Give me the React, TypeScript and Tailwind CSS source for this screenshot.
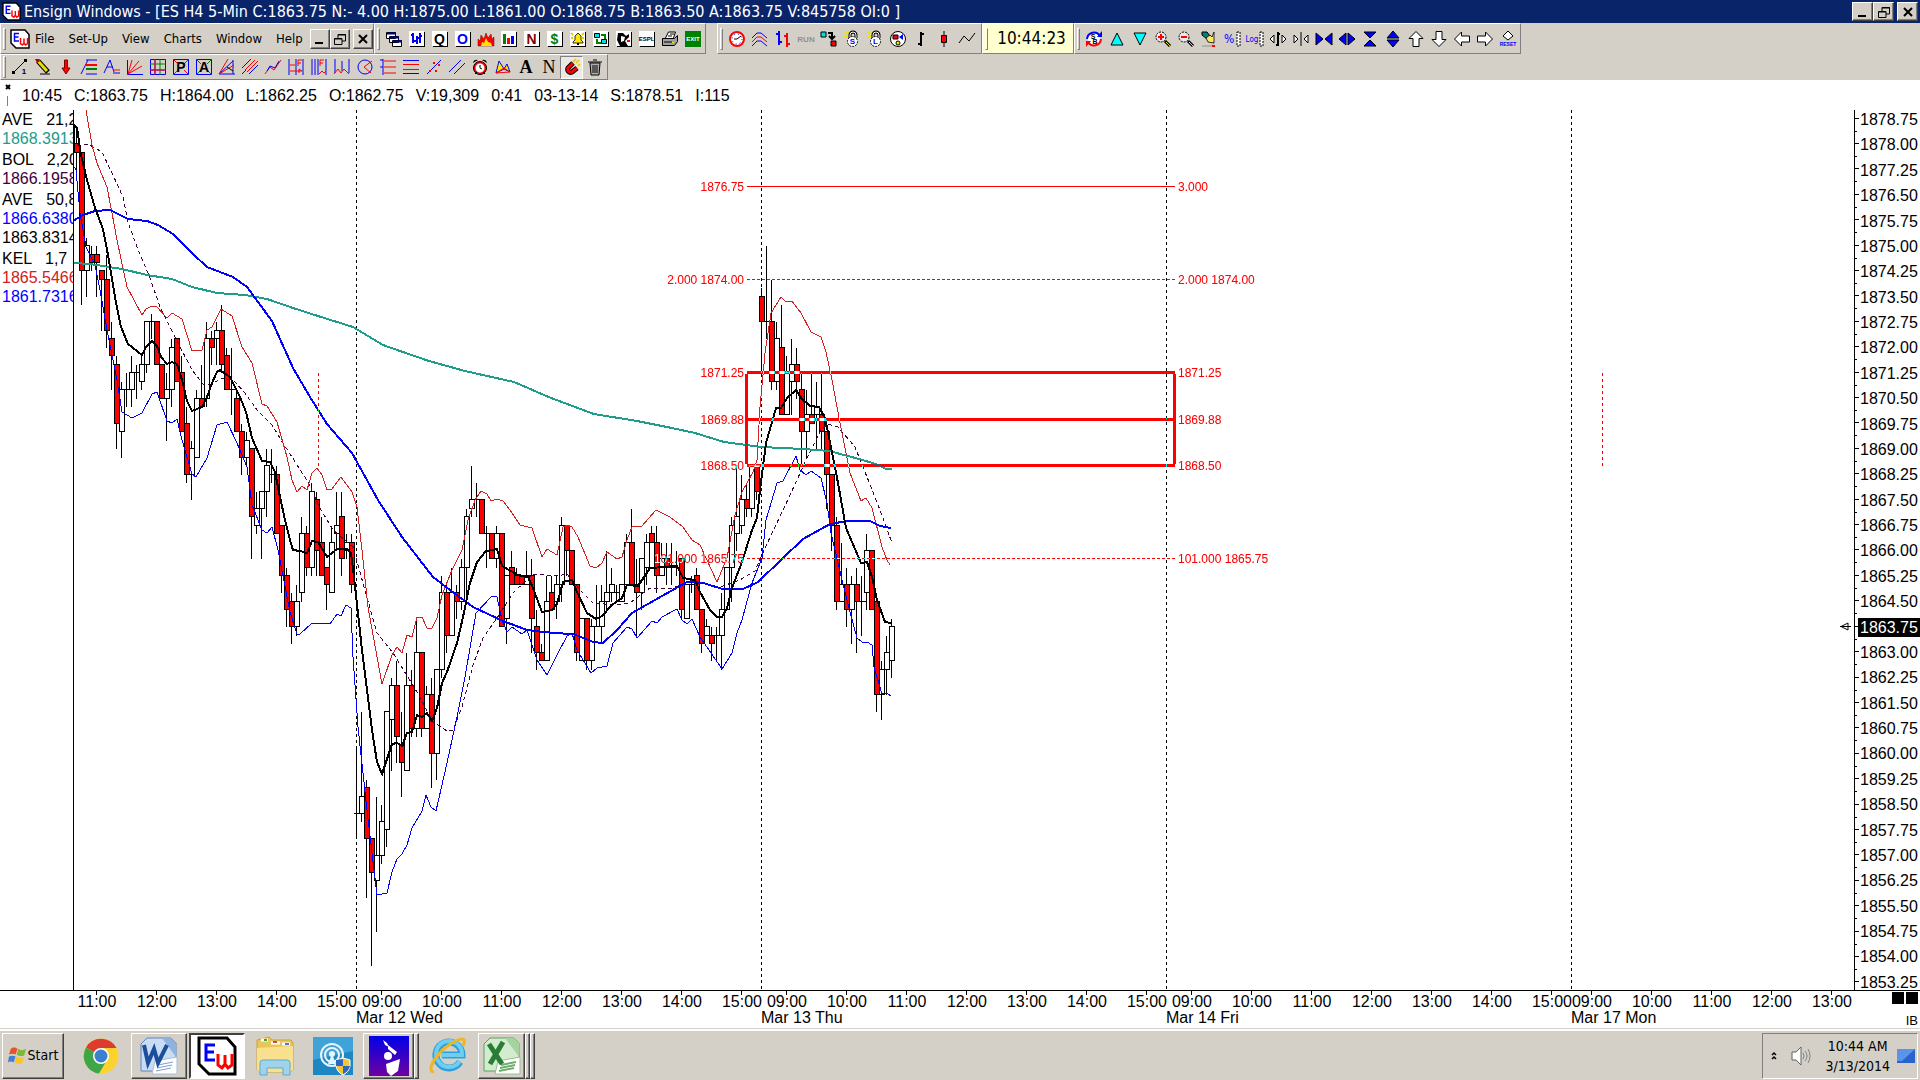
import React from "react";

/* ---------- chart data ---------- */

const PLOT_X = 73;
const PLOT_Y = 110;
const BAR_STEP = 5;
const TOP_PRICE_Y = 118.5;
const TICK_HEIGHT = 8.47;

// open, high, low, close in quarter-point ticks below 1878.75
const BARS: number[][] = [
  [1, 0, 3, 3], [3, 1, 7, 4], [4, 4, 22, 18], [18, 14, 21, 15], [16, 15, 18, 17], [16, 15, 21, 17],
  [18, 18, 25, 19], [19, 16, 27, 25], [26, 24, 32, 28], [29, 28, 39, 36], [37, 31, 40, 32], [32, 30, 34, 32],
  [32, 28, 34, 30], [30, 29, 33, 30], [31, 28, 32, 29], [29, 24, 30, 24], [24, 23, 26, 24], [24, 24, 29, 29],
  [29, 29, 33, 33], [33, 30, 38, 32], [32, 26, 34, 27], [26, 26, 31, 31], [30, 28, 37, 37], [36, 34, 43, 42],
  [42, 38, 45, 39], [40, 32, 40, 33], [33, 29, 34, 34], [33, 24, 34, 26], [26, 25, 29, 27], [26, 24, 29, 25],
  [25, 22, 30, 29], [28, 27, 32, 32], [32, 27, 35, 32], [33, 32, 37, 37], [37, 36, 42, 40], [40, 37, 41, 38],
  [39, 39, 52, 47], [48, 44, 49, 46], [46, 44, 52, 44], [44, 39, 47, 41], [42, 39, 43, 42], [42, 41, 49, 49],
  [48, 48, 56, 54], [54, 53, 60, 58], [57, 56, 62, 60], [60, 55, 61, 57], [56, 47, 57, 49], [49, 48, 54, 53],
  [53, 43, 54, 44], [45, 44, 54, 51], [50, 47, 54, 54], [53, 53, 58, 55], [56, 48, 56, 50], [49, 44, 51, 48],
  [47, 44, 54, 52], [51, 49, 52, 50], [50, 49, 56, 55], [82, 74, 85, 82], [82, 70, 83, 80], [79, 78, 92, 85],
  [85, 85, 100, 89], [90, 80, 96, 87], [87, 81, 88, 83], [84, 70, 86, 70], [71, 66, 77, 67], [67, 64, 76, 73],
  [74, 70, 80, 76], [77, 63, 77, 67], [67, 65, 73, 72], [72, 59, 73, 63], [63, 63, 73, 72], [72, 67, 72, 68],
  [68, 66, 79, 75], [75, 65, 78, 65], [65, 54, 66, 56], [56, 55, 63, 61], [61, 53, 61, 56], [56, 55, 59, 57],
  [57, 52, 58, 53], [53, 46, 57, 47], [46, 41, 47, 45], [45, 43, 47, 45], [45, 45, 49, 49], [49, 48, 53, 49],
  [49, 49, 52, 52], [52, 48, 53, 49], [49, 49, 60, 60], [59, 54, 62, 54], [53, 51, 55, 55], [54, 53, 55, 55],
  [54, 54, 55, 55], [55, 51, 55, 54], [54, 52, 63, 59], [60, 58, 65, 63], [63, 62, 64, 64], [64, 54, 64, 57],
  [56, 54, 58, 58], [57, 54, 59, 55], [55, 47, 57, 48], [48, 48, 54, 51], [51, 51, 55, 55], [55, 55, 64, 63],
  [64, 59, 64, 59], [59, 59, 65, 64], [64, 59, 65, 60], [60, 55, 60, 60], [60, 55, 62, 57], [57, 51, 58, 56],
  [56, 53, 57, 55], [56, 55, 57, 56], [57, 55, 57, 55], [55, 49, 55, 50], [50, 46, 55, 55], [55, 52, 61, 56],
  [56, 52, 58, 52], [53, 49, 55, 50], [49, 48, 50, 50], [50, 48, 56, 54], [54, 50, 54, 52], [52, 50, 55, 53],
  [53, 50, 55, 53], [53, 51, 54, 53], [52, 52, 59, 58], [59, 55, 59, 55], [55, 54, 56, 55], [54, 53, 58, 58],
  [58, 58, 63, 62], [61, 59, 61, 60], [61, 60, 64, 62], [61, 60, 64, 61], [61, 56, 65, 58], [58, 53, 58, 53],
  [53, 47, 57, 48], [49, 41, 51, 47], [48, 42, 49, 45], [45, 43, 47, 46], [46, 41, 47, 41], [41, 41, 45, 44],
  [21, 20, 30, 24], [24, 15, 26, 24], [24, 19, 32, 31], [31, 24, 32, 26], [27, 22, 35, 35], [35, 28, 35, 30],
  [31, 26, 35, 29], [29, 27, 33, 31], [32, 30, 41, 37], [37, 32, 40, 35], [35, 30, 36, 36], [35, 31, 39, 34],
  [35, 30, 39, 37], [37, 37, 46, 42], [42, 42, 51, 48], [48, 47, 58, 57], [57, 50, 57, 55], [55, 53, 60, 58],
  [58, 54, 62, 55], [55, 53, 63, 57], [57, 54, 61, 57], [56, 49, 58, 51], [51, 51, 58, 58], [57, 57, 70, 68],
  [68, 64, 71, 65], [65, 61, 68, 63], [64, 59, 66, 60],
];

const SLOW_AVERAGE =
  "73,263 90,264 122,269 147,275 172,279 192,287 217,293 245,295 267,299 293,308 318,316 353,327 383,345 400,351 429,361 465,371 514,382 551,398 594,414 637,421 672,428 695,433 724,442 761,447 804,449 829,451 859,459 876,464 886,469 892,469";
const MEDIUM_AVERAGE =
  "73,221 83,215 95,211 110,210 128,219 147,221 158,225 173,234 192,253 207,267 233,277 247,287 272,321 293,368 310,397 327,424 352,453 378,500 402,537 433,577 450,590 473,607 503,621 527,630 553,633 573,634 593,642 603,643 617,630 632,613 655,600 687,582 703,583 723,589 743,589 758,582 782,559 803,539 830,524 847,521 870,521 880,526 891,528";
const FAST_AVERAGE =
  "73,124 77,128 81,155 87,180 95,208 103,229 108,255 115,297 121,327 128,344 142,355 146,347 152,341 157,346 161,357 167,364 172,362 177,364 182,380 187,401 192,411 202,407 207,397 212,383 217,372 220,370 230,377 240,397 246,412 252,438 262,461 270,462 275,472 280,497 285,520 290,540 293,550 300,551 307,553 312,541 318,542 327,557 337,549 347,549 351,553 354,577 362,650 372,730 377,762 382,774 392,744 397,743 402,746 407,733 412,732 417,715 422,717 427,713 432,721 437,708 442,683 447,672 457,643 463,617 470,583 477,562 486,551 497,549 502,566 518,575 528,577 533,588 542,612 552,610 557,604 563,582 572,580 577,592 587,613 596,619 602,616 612,605 622,598 627,585 638,586 650,568 677,566 683,578 695,580 700,592 710,610 717,617 722,617 727,608 732,588 742,562 752,530 757,518 760,490 766,443 776,408 781,408 787,398 796,390 802,399 810,406 819,407 825,418 831,447 838,483 846,528 861,563 867,562 872,577 877,600 885,622 891,623";
const UPPER_CHANNEL =
  "84,100 86,110 92,145 97,163 107,187 112,213 117,240 127,287 142,315 146,309 152,306 157,307 167,318 172,313 182,319 192,351 202,350 207,330 212,327 221,309 232,316 242,347 252,363 262,404 267,406 277,422 287,457 292,480 297,492 302,486 307,490 312,473 317,468 322,475 327,490 332,489 341,477 352,492 357,507 362,550 368,607 382,684 392,655 397,647 402,653 407,635 412,637 417,617 422,617 427,628 432,628 437,618 442,595 452,570 462,550 468,520 475,500 481,491 487,494 491,501 497,499 503,501 510,510 520,525 532,528 542,557 547,549 557,555 563,527 567,525 572,527 578,537 590,566 596,568 602,563 607,552 617,559 622,557 627,540 632,527 642,526 656,510 670,517 683,527 692,540 700,545 707,560 717,582 727,558 735,515 742,492 753,472 757,460 760,407 765,353 771,313 781,297 786,302 792,301 801,313 811,332 821,337 826,352 832,380 840,423 850,473 861,501 866,498 872,508 882,547 887,560 890,565";
const LOWER_CHANNEL =
  "73,165 76,170 80,213 86,247 95,265 100,290 107,330 117,380 122,412 132,418 142,413 152,394 157,392 167,421 172,423 177,419 182,440 192,474 196,477 207,458 217,425 227,422 237,443 247,467 252,505 262,530 267,533 272,527 278,550 290,612 297,634 300,634 312,623 330,624 337,614 341,616 346,605 351,608 353,657 358,727 367,810 372,853 377,895 387,893 392,872 397,859 402,854 407,845 412,828 422,811 426,795 431,807 436,811 447,763 457,717 465,677 476,613 492,596 497,597 502,620 507,632 512,627 522,634 527,630 537,660 547,675 557,655 567,636 572,633 577,650 591,673 597,668 607,666 613,643 627,627 632,629 637,638 652,621 657,623 662,617 677,609 682,620 687,624 692,619 700,637 722,669 732,653 737,633 742,620 752,583 762,558 766,520 777,483 783,481 796,456 800,470 806,475 811,471 821,478 827,503 831,533 842,580 850,612 857,638 862,642 867,642 872,645 874,667 882,694 887,693 891,696";
const BAND_MIDLINE =
  "77,146 88,144 102,152 113,175 123,197 128,222 137,247 150,278 160,307 175,337 192,370 203,384 212,384 222,378 233,380 245,393 257,410 272,425 283,443 308,482 320,508 333,530 353,547 363,583 377,633 393,653 417,692 433,722 447,731 453,730 462,707 473,665 483,638 497,618 513,593 533,574 557,576 567,574 580,590 593,603 617,605 630,603 650,588 670,589 693,580 717,588 740,580 755,571 765,548 783,510 797,480 806,460 821,430 828,424 838,427 855,447 867,477 880,510 892,543";

const SESSION_LINES = [356, 761, 1166, 1571];

const LEVELS = [
  { y: 186, left: "1876.75", right: "3.000", width: 1, dash: undefined },
  { y: 279, left: "2.000 1874.00", right: "2.000 1874.00", width: 1, dash: "3 2" },
  { y: 372, left: "1871.25", right: "1871.25", width: 3, dash: undefined },
  { y: 419, left: "1869.88", right: "1869.88", width: 3, dash: undefined },
  { y: 465, left: "1868.50", right: "1868.50", width: 3, dash: undefined },
  { y: 558, left: "101.000 1865.75", right: "101.000 1865.75", width: 1, dash: "3 2" },
];

const PRICES = Array.from({ length: 35 }, (_, i) => (1878.75 - i * 0.75).toFixed(2));
const tickY = (t: number) => Math.round(TOP_PRICE_Y + t * TICK_HEIGHT - 0.5) + 0.5;

/* ---------- toolbar icons (16 x 16 grid) ---------- */

const R = "#ff0000";
const B = "#0000ff";
const K = "#000000";
const G = "#008000";

type P = { d: string; c?: string; f?: string; w?: number };
const L = ({ d, c = K, f = "none", w = 1 }: P) => <path d={d} stroke={c} fill={f} strokeWidth={w} />;
const T = ({ s, c = K, z = 14, x = 8, y = 13, serif = false }: { s: string; c?: string; z?: number; x?: number; y?: number; serif?: boolean }) => (
  <text x={x} y={y} fontSize={z} fontWeight="bold" fill={c} textAnchor="middle" fontFamily={serif ? "Liberation Serif, serif" : "Liberation Sans, sans-serif"}>
    {s}
  </text>
);
const Card = ({ children }: { children: React.ReactNode }) => (
  <>
    <path d="M1 1h15v15H1z" fill={K} />
    <path d="M0 0h15v15H0z" fill="#fff" />
    {children}
  </>
);
const Padlock = ({ s }: { s: string }) => (
  <>
    <path d="M1 1l3 2M0 5h4M5 0v3" stroke="#e8e800" strokeWidth="2" />
    <path d="M6 7V4a3 3 0 0 1 6 0v3" fill="none" stroke={K} strokeWidth="3" />
    <path d="M6 7V4a3 3 0 0 1 6 0v3" fill="none" stroke="#fff" />
    <circle cx="8.500" cy="10.500" r="5" fill="#fff" stroke={K} strokeDasharray="2 1" />
    <T s={s} c={B} z={8} x={8.5} y={13} />
  </>
);
const Lens = ({ s }: { s: string }) => (
  <>
    <path d="M10 10l5 5" stroke={K} strokeWidth="3" />
    <path d="M11 11l4 4" stroke="#e8e800" />
    <circle cx="6" cy="6" r="5" fill="#e8e8e8" stroke={K} strokeDasharray="2 1" />
    <path d={s} stroke={R} strokeWidth="2" />
  </>
);

type Tool = [string, React.ReactNode];

const WINDOW_TOOLS: Tool[] = [
  ["Cascade", <><L d="M.5 1.500h9v6h-9zM3.500 5.500h9v6h-9zM6.500 9.500h9v6h-9z" f="#fff" /><L d="M1 2.500h9M4 6.500h9M7 10.500h9" c="#000080" w={2} /></>],
  ["Bar chart", <Card><L d="M4 2v10M2 4h2M4 10h3M8 5v8M11 2v10M8 7h3M11 5h2" c={B} w={2} /></Card>],
  ["Quote", <Card><T s="Q" x={7.5} /></Card>],
  ["Options", <Card><T s="O" c={B} x={7.5} /></Card>],
  ["Heat map", <><path d="M0 15V8l2 2 1-6 3 4 2-6 2 5 3-4 1 5 2-2v9z" fill={R} stroke="#800000" strokeWidth=".5" /><path d="M3 15l1-4 2 1 2-5 2 4 3 1 1 3z" fill="#ffe000" /></>],
  ["Volume chart", <Card><path d="M2 3h3v10H2z" fill={G} /><path d="M6 7h3v6H6z" fill={R} /><path d="M10 5h3v8h-3z" fill={B} /></Card>],
  ["News", <Card><T s="N" c="#800000" x={7.5} /></Card>],
  ["Account", <Card><T s="$" c={G} x={7.5} /></Card>],
  ["Alert", <Card><path d="M8 2l3 3v4l2 2v1H3v-1l2-2V5z" fill="#ffe800" stroke={K} strokeWidth=".8" /><L d="M1 2l2 2M14 2l-2 2M1 7h2M12 7h2" c="#e8d000" w={2} /><path d="M7 12h2v2H7z" /></Card>],
  ["Network", <Card><path d="M1.500 2.500h5v4h-5zM8.500 8.500h5v4h-5z" fill="#00e0e0" stroke={K} /><L d="M8 4h4v4M4 8v4h4" c={G} w={2} /></Card>],
  ["Chat", <Card><path d="M2 2h5l3 3 3-2v3l-4 4 3 5H4L1 9z" fill={K} /><path d="M5 5l4 1-1 4-3 1z" fill="#fff" /><path d="M11 9h3v2h-3z" fill={R} /></Card>],
  ["ESPL", <Card><T s="ESPL" z={6} x={7.5} y={10} /></Card>],
  ["Print", <><L d="M3.500 7l3-6h7l-2 6" f="#fff" /><path d="M.5 7.500h12l3-3v6l-3 4H.5z" fill="#a0a0a0" stroke={K} /><L d="M2 11h8M8 3h4M6 5h4" /><path d="M10 11h2v1h-2z" fill="#e8e800" /></>],
  ["Exit", <><path d="M0 0h16v16H0z" fill={G} /><T s="EXIT" c="#fff" z={6} y={10} /></>],
];

const CHART_TOOLS: Tool[] = [
  ["Clock", <><circle cx="8" cy="8" r="7" fill="#fff" stroke={R} strokeWidth="2" /><L d="M8 8l4-3M8 8H5" /><circle cx="8" cy="8" r="5" fill="none" stroke={B} strokeDasharray="1 3" /></>],
  ["Studies", <><L d="M0 7l5-5h4l6 5" c={B} /><L d="M0 11l5-5h4l6 5" c={R} /><L d="M0 15l5-5h4l6 5" c={B} /></>],
  ["Bars", <><L d="M4 0v14M1 3h3M4 11h3" c={B} w={2} /><L d="M12 2v14M9 5h3M12 13h3" c={R} w={2} /></>],
  ["Run", <T s="RUN" c="#909090" z={8} y={11} />],
  ["Replace", <><path d="M0 1h5v5H0z" fill="#00e0e0" stroke={K} /><path d="M10 10h5v5h-5z" fill={R} stroke={K} /><L d="M7 2h4v5M8 5l3 3 3-3" w={2} /></>],
  ["Save lock", <Padlock s="S" />],
  ["Load lock", <Padlock s="L" />],
  ["Shapes", <><circle cx="8" cy="8" r="7.500" fill="#fff" stroke={K} /><path d="M3 4h5v4H3z" fill={R} stroke={K} /><path d="M13 3v6L9 6z" fill={B} /><circle cx="8" cy="12" r="2" fill="#e8e800" stroke={K} /></>],
  ["Bar style", <L d="M8 1v14M5 13h3M8 3h3" w={2} />],
  ["Candle style", <><L d="M8 0v16" /><path d="M5.500 4.500h5v7h-5z" fill={R} stroke={K} /></>],
  ["Line style", <L d="M0 12l5-7 5 5 6-8" />],
];

const VIEW_TOOLS: Tool[] = [
  ["Refresh", <><circle cx="8" cy="8" r="6" fill="#fff" /><path d="M1 8a7 7 0 0 1 13-3" fill="none" stroke={B} strokeWidth="2" /><path d="M11 6h5V0z" fill={B} /><path d="M15 8a7 7 0 0 1-13 3" fill="none" stroke={R} strokeWidth="2" /><path d="M5 10H0v6z" fill={R} /><T s="S" z={7} x={7} y={8} /><T s="B" z={7} x={9} y={13} /></>],
  ["Up", <L d="M8 2L2 14h12z" f="#00ffff" />],
  ["Down", <L d="M8 14L2 2h12z" f="#00ffff" />],
  ["Zoom in", <Lens s="M3 6h6M6 3v6" />],
  ["Zoom out", <Lens s="M3 6h6" />],
  ["Clean", <><path d="M1 1h5l3 4-3 3-5-4z" fill="#008080" stroke={K} /><path d="M5 7l4-3 2 2 2-5v11l-6-1z" fill="#ffe860" stroke={K} strokeWidth=".8" /><L d="M1 15h12" c="#909090" /><path d="M11 14h3v2h-3z" fill={R} /></>],
  ["Percent scale", <><text x="5" y="12" fontSize="12" fill={B} textAnchor="middle">%</text><path d="M13 1h3v14h-3z" fill="#fff" stroke={K} strokeDasharray="2 1" /></>],
  ["Log scale", <><text x="5" y="11" fontSize="8" fill={B} textAnchor="middle">Log</text><path d="M13 1h3v14h-3z" fill="#fff" stroke={K} strokeDasharray="2 1" /></>],
  ["Bar spacing wide", <><L d="M4 4v8L0 8zM12 4v8l4-4z" f="#fff" /><L d="M8 1v14M6 14h2M8 3h2" w={2} /></>],
  ["Bar spacing narrow", <><L d="M1 4v8l4-4zM15 4v8l-4-4z" f="#fff" /><L d="M8 1v14" /></>],
  ["Compress", <path d="M0 2l7 6-7 6zM16 2L9 8l7 6z" fill={B} stroke={K} />],
  ["Expand", <path d="M7 2v12L0 8zM9 2v12l7-6z" fill={B} stroke={K} />],
  ["Compress vertically", <path d="M2 1h12L8 7zM2 15h12L8 9z" fill={B} stroke={K} />],
  ["Expand vertically", <path d="M2 7h12L8 0zM2 9h12l-6 7z" fill={B} stroke={K} />],
  ["Scroll up", <L d="M8 .5l7 7h-4v8H5v-8H1z" f="#fff" />],
  ["Scroll down", <L d="M8 15.500l7-7h-4v-8H5v8H1z" f="#fff" />],
  ["Scroll left", <L d="M.5 8l7-7v4h8v6h-8v4z" f="#fff" />],
  ["Scroll right", <L d="M15.500 8l-7-7v4h-8v6h8v4z" f="#fff" />],
  ["Reset", <><L d="M8 0l5 5-5 4-5-4z" f="#fff" /><T s="RESET" c={B} z={5} y={15} /></>],
];

const DRAW_TOOLS: Tool[] = [
  ["Trend line", <><L d="M2 13L13 2" /><path d="M0 12h3v3H0zM12 0h3v3h-3z" /><T s="1" z={8} x={12} y={15} /></>],
  ["Pencil", <><L d="M3 2l10 11" w={5} /><L d="M3 2l9 10" c="#e8e000" w={3} /><L d="M5 15h10" /><path d="M0 0h4l1 2-3 2z" fill="#c00000" /></>],
  ["Marker", <path d="M6.500 1v8H4l4 6 4-6H9.500V1z" fill={R} stroke="#800000" />],
  ["Retracement", <><L d="M0 15L7 1" c={B} /><L d="M5 1h11M5 15h11" c={B} /><L d="M5 6h11" c={R} w={2} /><L d="M5 10h11" c={G} w={2} /></>],
  ["Projection", <><L d="M0 14L6 1l4 12M3 8h6" c={B} /><L d="M9 11h7" c={R} /><L d="M9 14h7" c={B} /></>],
  ["Fan", <><L d="M.5 1v14.500H16" c={B} /><L d="M1 15L5 1M1 15L12 2M1 15l14-8" c={R} /></>],
  ["Grid", <><L d="M.5 .5h15v15H.5zM5 0v16M0 11h16" c={B} /><L d="M10 0v16M0 5h16" c={G} /><L d="M5 0v16M0 11h16" c={R} /></>],
  ["Pivot", <><L d="M.5 .5h15v15H.5z" c={B} /><L d="M1 1l4 4M11 11l4 4" c={R} /><L d="M15 1l-4 4M5 11l-4 4" c={G} /><T s="P" y={13} /></>],
  ["Andrews", <><L d="M.5 .5h15v15H.5z" c={B} /><L d="M1 1l4 4M11 11l4 4" c={R} /><L d="M15 1l-4 4M5 11l-4 4" c={G} /><T s="A" y={13} /></>],
  ["Angle", <><L d="M14 2L0 15h16M14 1v14" c={B} /><L d="M0 15L9 0M0 15l15-9" c={R} /><L d="M8 8l6 4" /></>],
  ["Pitchfork", <><L d="M0 9l9-9M7 15l9-9M0 15l4-4" c={B} /><L d="M3 11L13 1M5 13L16 2" c={R} /></>],
  ["Zigzag", <><L d="M0 15l5-7 4 3 7-10" c={R} /><L d="M2 12l3-5 5 2 4-7" c={B} /></>],
  ["Fibonacci time", <><L d="M1 0v16M8 0v16M15 0v16" c={B} /><L d="M2 6h5M2 12h12l-3-2v4M10 7V1h4M10 4h3" c={R} /></>],
  ["Cycle lines", <><L d="M1 0v16M4 0v16M7 0v16M15 0v16" c={B} /><L d="M9 7V1h4M9 4h3M8 15l3-3 2 2 2-2" c={R} /></>],
  ["Cycles", <><L d="M1 0v14M8 2v10M15 0v14" c={B} /><L d="M0 15l4-5 3 4 3-4 5 5" c={R} /></>],
  ["Circle", <><circle cx="8" cy="8" r="7" fill="none" stroke={B} /><L d="M15 2L7 8l7 6" c={R} /></>],
  ["Levels left", <><L d="M3 0v16M0 8h3M0 1h3" c={B} /><L d="M4 2h12M4 8h12M4 14h12" c={R} /></>],
  ["Levels", <><L d="M0 1.500h16M0 14.500h16" c={B} /><L d="M0 5.500h16M0 10.500h16" c={R} /></>],
  ["Regression", <><L d="M1 15L15 1" c={B} /><path d="M3 11h2v2H3zM9 11h2v2H9zM7 3h2v2H7zM12 5h2v2h-2z" fill={R} /></>],
  ["Parallel lines", <L d="M0 13L12 1M5 15L16 4" c={B} />],
  ["Alarm", <><circle cx="8" cy="9" r="5.500" fill="#fff" stroke={R} strokeWidth="2" /><circle cx="8" cy="9" r="6.500" fill="none" stroke={K} /><path d="M1 4q1-4 5-3zM15 4q-1-4-5-3z" /><L d="M8 6v3l2 1M3 15l2-2M13 15l-2-2" /></>],
  ["Pattern", <><path d="M1 14L4 2l5 8z M9 10l3-5 3 8z" fill="#ffe800" stroke={B} /><L d="M1 14l14-1-6-4z" c={R} /></>],
  ["Bold text", <T s="A" z={18} y={14} serif />],
  ["Note", <text x="8" y="14" fontSize="18" textAnchor="middle" fontFamily="Liberation Serif, serif">N</text>],
  ["Magnet", <><path d="M9 4L4 9a3 3 0 0 0 4 4l5-4" fill="none" stroke={K} strokeWidth="5" /><path d="M9 4L4 9a3 3 0 0 0 4 4l5-4" fill="none" stroke={R} strokeWidth="3" /><L d="M9 3l3-3M12 4l3-3M14 7l2-2" c="#e8d800" w={2} /></>],
  ["Delete", <><path d="M3 4h10l-1 12H4z" fill="#b0b0b0" stroke={K} /><L d="M1 3h14M6 1h4M6 6v8M8 6v8M10 6v8" /></>],
];

function ToolButton({ tool, pressed }: { tool: Tool; pressed?: boolean }) {
  return (
    <button
      aria-label={tool[0]}
      className={
        pressed
          ? "flex h-[23px] w-[23px] shrink-0 items-center justify-center border border-t-[#808080] border-l-[#808080] border-r-white border-b-white bg-[#ebe9e4]"
          : "flex h-[23px] w-[23px] shrink-0 items-center justify-center"
      }
    >
      <svg viewBox="0 0 16 16" className="size-4 overflow-visible">
        {tool[1]}
      </svg>
    </button>
  );
}

function Band({ children, className = "" }: { children: React.ReactNode; className?: string }) {
  return (
    <div className={"flex shrink-0 items-center border border-t-white border-l-white border-r-[#808080] border-b-[#808080] " + className}>
      <span className="ml-[2px] mr-[2px] h-[22px] w-[3px] shrink-0 border border-t-white border-l-white border-r-[#808080] border-b-[#808080]" />
      {children}
    </div>
  );
}

function EnsignLogo({ className }: { className: string }) {
  return (
    <svg viewBox="0 0 40 40" className={"shrink-0 " + className}>
      <path d="M2 2h28l8 9v27H12L2 28z" fill="#fff" stroke="#000" strokeWidth="3" />
      <path d="M18 9H9v15h9M9 16h8" fill="none" stroke="#0000ff" strokeWidth="3" />
      <path d="M21 18v11l4 3 3-4 3 4 4-3V18M28 19v9" fill="none" stroke="#ff0000" strokeWidth="3" />
    </svg>
  );
}

const RAISED =
  "flex shrink-0 items-center justify-center border border-t-white border-l-white border-r-[#404040] border-b-[#404040] bg-[#d4d0c8] shadow-[inset_-1px_-1px_0_#808080]";

function WindowButtons({ className }: { className: string }) {
  return (
    <div className="flex items-center">
      <button aria-label="Minimize" className={RAISED + " " + className}>
        <svg viewBox="0 0 12 12" className="size-3"><path d="M1 9h8v2H1z" /></svg>
      </button>
      <button aria-label="Restore" className={RAISED + " " + className}>
        <svg viewBox="0 0 12 12" className="size-3"><path d="M4 5V1.500h7.500V8H8M4 2h8M.5 5.500H8v6H.5zM1 6h7" fill="none" stroke="#000" /></svg>
      </button>
      <button aria-label="Close" className={RAISED + " ml-[3px] " + className}>
        <svg viewBox="0 0 12 12" className="size-3"><path d="M2 2l8 8M10 2l-8 8" stroke="#000" strokeWidth="2" /></svg>
      </button>
    </div>
  );
}

/* ---------- chart ---------- */

function PricePlot() {
  return (
    <svg className="isolate block h-full w-full" role="img" aria-label="ES H4 5-minute candlestick chart">
      <rect width="100%" height="100%" fill="#fff" />
      <g transform={`translate(${-PLOT_X} ${-PLOT_Y})`}>
        <g stroke="#000" strokeDasharray="3 3" shapeRendering="crispEdges">
          {SESSION_LINES.map((x) => (
            <line key={x} x1={x + 0.5} x2={x + 0.5} y1={PLOT_Y} y2="200%" />
          ))}
        </g>
        <g stroke="#000" shapeRendering="crispEdges">
          {BARS.map(([o, h, l, c], i) => {
            const x = 71.5 + i * BAR_STEP;
            const top = tickY(Math.min(o, c));
            const bottom = tickY(Math.max(o, c));
            return (
              <g key={i}>
                <line x1={x} x2={x} y1={tickY(h)} y2={tickY(l)} />
                {o === c ? (
                  <line x1={x - 3} x2={x + 4} y1={top} y2={top} />
                ) : (
                  <rect x={x - 2} y={top} width={5} height={bottom - top} fill={c > o ? "#ff0000" : "#fff"} />
                )}
              </g>
            );
          })}
        </g>
        <g fill="none" shapeRendering="crispEdges">
          <polyline points={BAND_MIDLINE} stroke="#400040" strokeDasharray="4 3" />
          <polyline points={UPPER_CHANNEL} stroke="#d02020" />
          <polyline points={LOWER_CHANNEL} stroke="#0000ff" />
          <polyline points={SLOW_AVERAGE} stroke="#209c8a" strokeWidth="2" />
          <polyline points={MEDIUM_AVERAGE} stroke="#0000ff" strokeWidth="2" />
          <polyline points={FAST_AVERAGE} stroke="#000" strokeWidth="2" />
        </g>
        <g className="mix-blend-difference" stroke="#00ffff" fill="none" shapeRendering="crispEdges">
          <path d="M318.500 373V466M1602.500 373V466" strokeDasharray="3 3" />
          <path d="M746.500 374V464M1174.500 374V464" strokeWidth="3" />
          {LEVELS.map((v) => (
            <line key={v.y} x1="747" x2="1175" y1={v.y + 0.5} y2={v.y + 0.5} strokeWidth={v.width} strokeDasharray={v.dash} />
          ))}
        </g>
        <g className="mix-blend-difference" fill="#00ffff" fontSize="12" fontFamily="Liberation Sans, sans-serif">
          {LEVELS.map((v) => (
            <g key={v.y}>
              <text x="744" y={v.y + 5} textAnchor="end">{v.left}</text>
              <text x="1178" y={v.y + 5}>{v.right}</text>
            </g>
          ))}
        </g>
      </g>
    </svg>
  );
}

function Legend() {
  const groups = [
    { name: "AVE   21,2", values: [["1868.3913", "text-[#209c8a]"]] },
    { name: "BOL   2,20", values: [["1866.1958", "text-[#400040]"]] },
    { name: "AVE   50,8", values: [["1866.6380", "text-[#0000ff]"], ["1863.8314", "text-black"]] },
    { name: "KEL   1,7 ,", values: [["1865.5466", "text-[#d02020]"], ["1861.7316", "text-[#0000ff]"]] },
  ];
  return (
    <div className="flex w-[73px] shrink-0 flex-col gap-[2px] overflow-hidden pl-[2px] leading-[19px] whitespace-pre">
      {groups.map((g) => (
        <div key={g.name}>
          <div>{g.name}</div>
          {g.values.map(([v, tone]) => (
            <div key={v} className={tone}>{v}</div>
          ))}
        </div>
      ))}
    </div>
  );
}

function PriceAxis() {
  return (
    <div className="relative flex w-[66px] shrink-0 border-l border-black">
      <svg className="h-full w-1 shrink-0" shapeRendering="crispEdges">
        {PRICES.map((p, i) => {
          const y = Math.round(TOP_PRICE_Y - PLOT_Y + i * 3 * TICK_HEIGHT) - 0.5;
          return <path key={p} d={`M0 ${y}h4M0 ${y + 13}h2`} stroke="#000" />;
        })}
      </svg>
      <div className="flex flex-col justify-between pt-[3px] pl-px leading-[14px]">
        {PRICES.map((p) => (
          <span key={p}>{p}</span>
        ))}
      </div>
      <span className="absolute top-[508px] right-0 left-[3px] bg-black pl-[2px] leading-[19px] text-white">1863.75</span>
      <svg className="absolute top-[512px] -left-[15px] h-[9px] w-[11px]" viewBox="0 0 11 9">
        <path d="M0 4.500h11M1 4.500L8 1v7z" fill="#fff" stroke="#000" />
      </svg>
    </div>
  );
}

function Hours({ labels, className }: { labels: string[]; className: string }) {
  return (
    <div className={"flex " + className}>
      {labels.map((h) => (
        <span key={h} className="flex w-[60px] shrink-0 flex-col items-center">
          <span className="-ml-px h-1 w-px bg-black" />
          <span className="leading-[14px]">{h}</span>
        </span>
      ))}
    </div>
  );
}

function TimeAxis() {
  const day = ["09:00", "10:00", "11:00", "12:00", "13:00", "14:00", "15:00"];
  return (
    <div className="flex h-[39px] shrink-0 overflow-hidden border-t border-black">
      <div className="w-[356px] shrink-0">
        <Hours labels={day.slice(2)} className="pl-[67px]" />
      </div>
      {["Mar 12 Wed", "Mar 13 Thu", "Mar 14 Fri"].map((d) => (
        <div key={d} className="w-[405px] shrink-0">
          <Hours labels={day} className="-ml-1" />
          <div className="leading-[18px]">{d}</div>
        </div>
      ))}
      <div className="min-w-0 flex-1">
        <Hours labels={day.slice(0, 5)} className="-ml-[9px]" />
        <div className="leading-[18px]">Mar 17 Mon</div>
      </div>
      <div className="flex flex-col items-end justify-between pt-px pr-[2px]">
        <div className="flex gap-[2px]">
          <span className="size-3 bg-black" />
          <span className="size-3 bg-black" />
        </div>
        <span className="text-[13px] leading-4">IB</span>
      </div>
    </div>
  );
}

/* ---------- taskbar ---------- */

const TASK = "flex h-[46px] w-[56px] shrink-0 items-center justify-center ";

function Taskbar() {
  return (
    <footer className="flex h-[51px] shrink-0 items-center border-t-2 border-white bg-[#d4d0c8] pr-[2px] pl-[2px] shadow-[0_-1px_0_#d4d0c8]">
      <button className={RAISED + " h-[46px] w-[62px] gap-px text-[14px]"}>
        <svg viewBox="0 0 20 20" className="size-[19px]">
          <path d="M3 3c2-2 5-2 7 0L8 9C6 8 4 8 1 9z" fill="#e8542a" />
          <path d="M11 3c2 2 5 2 8 0l-2 7c-3 1-5 1-8-1z" fill="#7db83a" />
          <path d="M1 11c2-1 5-1 7 0l-2 6c-2-1-4-1-6 0z" fill="#3f7fd6" />
          <path d="M9 11c2 1 5 2 8 1l-2 6c-3 1-6 1-8-1z" fill="#f7c52a" />
        </svg>
        Start
      </button>
      <button aria-label="Chrome" className={TASK + "ml-[9px]"}>
        <svg viewBox="0 0 36 36" className="size-9">
          <circle cx="18" cy="18" r="17.500" fill="#fcd22f" />
          <path d="M18 18L3 9.500A17.500 17.500 0 0 1 33.500 10H18z" fill="#dd3b2e" />
          <path d="M3 9.500A17.500 17.500 0 0 0 16 35.500l8-13.500-6-4z" fill="#3fa648" />
          <circle cx="18" cy="18" r="8" fill="#fff" />
          <circle cx="18" cy="18" r="6.500" fill="#3b7fd1" />
        </svg>
      </button>
      <button aria-label="Word" className={RAISED + " ml-[2px] h-[46px] w-[56px]"}>
        <svg viewBox="0 0 38 38" className="size-[38px]">
          <path d="M7 1h24l5 5v28H1V7z" fill="#c9dcf3" stroke="#5f86bd" />
          <path d="M22 1h9l5 5v14z" fill="#8fb2e0" />
          <path d="M15 24l22-4v17H12z" fill="#fff" stroke="#a9bfdc" />
          <path d="M18 28l15-3M17 31l15-3M16 34l15-3" stroke="#7f9fcd" />
          <path d="M4 8l4 18 6-14 4 14L27 8" fill="none" stroke="#1b4f9c" strokeWidth="4" />
        </svg>
      </button>
      <button aria-label="Ensign Windows" className="ml-[2px] flex h-[46px] w-[56px] shrink-0 items-center justify-center border-2 border-t-[#404040] border-l-[#404040] border-r-white border-b-white bg-white">
        <EnsignLogo className="size-10" />
      </button>
      <button aria-label="Explorer" className={TASK + "ml-[2px]"}>
        <svg viewBox="0 0 40 40" className="size-10">
          <path d="M2 4l12-3 3 3h19l2 3v27l-3 2H4l-2-2z" fill="#e9c65c" stroke="#c9a43a" />
          <path d="M6 4h7M16 7h9M27 8h8" stroke="#fff" strokeWidth="3" />
          <path d="M9 4h3" stroke="#3d9b47" strokeWidth="2" /><path d="M18 6h4" stroke="#d04a3a" strokeWidth="2" /><path d="M30 8h4" stroke="#3b82d6" strokeWidth="2" />
          <path d="M2 12l36-2v24l-3 2H4l-2-2z" fill="#f8e08e" />
          <path d="M5 39V27q0-3 3-3h24q3 0 3 3v12h-7v-7H12v7z" fill="#9fd3ec" stroke="#5fa9cf" />
        </svg>
      </button>
      <button aria-label="Remote access" className={TASK + "ml-[2px]"}>
        <svg viewBox="0 0 40 40" className="size-10">
          <path d="M0 1h40v38H0z" fill="#1d87c4" /><path d="M0 1h40v14L0 24z" fill="#3fa2d8" />
          <circle cx="19" cy="19" r="11" fill="none" stroke="#e6f4fc" strokeWidth="2" />
          <circle cx="19" cy="19" r="7" fill="none" stroke="#e6f4fc" strokeWidth="2" />
          <path d="M19 18l-4 10h8z" fill="#e6f4fc" /><circle cx="19" cy="18" r="3" fill="#e6f4fc" />
          <path d="M23 24l7-2 7 2v6q-1 6-7 9-6-3-7-9z" fill="#f3c63a" stroke="#fff" />
          <path d="M30 23v7h-7v-6zM30 30h7q-1 5-7 8z" fill="#2f66c4" />
        </svg>
      </button>
      <div className="ml-[2px] flex">
        <button aria-label="Drawing app" className={RAISED + " h-[46px] w-[51px]"}>
          <svg viewBox="0 0 40 40" className="size-10">
            <defs><linearGradient id="night" x2="0" y2="1"><stop stopColor="#0000e8" /><stop offset="1" stopColor="#7000a0" /></linearGradient></defs>
            <path d="M0 0h40v40H0z" fill="url(#night)" />
            <path d="M14 4l4 3 2 4-4-2zM19 9l9 7-2 3-7-6z" fill="#fff" /><circle cx="19" cy="20" r="4" fill="#fff" />
            <path d="M17 28l14-5-2 12-7 5-4-4z" fill="#fff" />
          </svg>
        </button>
        <span className={RAISED + " h-[46px] w-[5px]"} />
      </div>
      <button aria-label="Internet Explorer" className={TASK + "ml-px"}>
        <svg viewBox="0 0 38 38" className="size-[38px]">
          <path d="M31 25a13 13 0 1 1 2-7H13" fill="none" stroke="#2f9fdc" strokeWidth="7" />
          <path d="M31 24a13 13 0 1 1 2-6H12" fill="none" stroke="#6fcdf2" strokeWidth="4" />
          <path d="M5 35C-4 34 8 16 20 8 30 1 39-1 34 9" fill="none" stroke="#eeb622" strokeWidth="3" />
        </svg>
      </button>
      <div className="ml-[2px] flex">
        <button aria-label="Excel" className={RAISED + " h-[46px] w-[47px]"}>
          <svg viewBox="0 0 38 38" className="size-[38px]">
            <path d="M7 1h24l5 5v28H1V7z" fill="#d3ecd0" stroke="#5f9f5c" />
            <path d="M22 1h9l5 5v14z" fill="#a5d39f" />
            <path d="M15 24l22-4v17H12z" fill="#fff" stroke="#94c08f" />
            <path d="M18 28l15-3M17 31l15-3M16 34l15-3" stroke="#6fae69" strokeWidth="2" />
            <path d="M6 7l13 20M20 5L7 27" fill="none" stroke="#2a7d35" strokeWidth="5" />
          </svg>
        </button>
        <span className={RAISED + " h-[46px] w-[5px]"} />
        <span className={RAISED + " h-[46px] w-[5px]"} />
      </div>
      <div className="ml-auto flex h-[46px] items-center border border-t-[#808080] border-l-[#808080] border-r-white border-b-white pr-[2px] pl-2">
        <button aria-label="Show hidden icons">
          <svg viewBox="0 0 6 9" className="h-[9px] w-[6px]"><path d="M1 4l2-2 2 2M1 8l2-2 2 2" fill="none" stroke="#000" strokeWidth="1.500" /></svg>
        </button>
        <svg viewBox="0 0 20 20" className="ml-[14px] size-5" aria-label="Volume">
          <path d="M1 6h4l5-5v18l-5-5H1z" fill="#fff" stroke="#606060" />
          <path d="M12 7q2 3 0 6M14 5q4 5 0 10M17 3q4 7 0 14" fill="none" stroke="#808080" />
        </svg>
        <div className="ml-[14px] text-center text-[14px] leading-5">
          <div>10:44 AM</div>
          <div>3/13/2014</div>
        </div>
        <svg viewBox="0 0 18 14" className="ml-[7px] h-[14px] w-[18px]" aria-label="Show desktop">
          <path d="M0 0h18v14H0z" fill="#2a62d0" /><path d="M0 0h18L5 12H0z" fill="#5a94ea" />
        </svg>
      </div>
    </footer>
  );
}

/* ---------- page ---------- */

const STATUS = ["10:45", "C:1863.75", "H:1864.00", "L:1862.25", "O:1862.75", "V:19,309", "0:41", "03-13-14", "S:1878.51", "I:115"];

export default function App() {
  return (
    <div className="flex min-h-screen flex-col overflow-hidden bg-white font-['DejaVu_Sans_Condensed','DejaVu_Sans',sans-serif] text-[14px] text-black">
      <header className="flex h-[23px] shrink-0 items-center bg-[#0a246a] pr-[2px] pl-[2px] text-white">
        <EnsignLogo className="size-[19px]" />
        <h1 className="ml-[3px] flex-1 truncate text-[16px] leading-[23px]">
          Ensign Windows - [ES H4 5-Min C:1863.75 N:- 4.00 H:1875.00 L:1861.00 O:1868.75 B:1863.50 A:1863.75 V:845758 OI:0 ]
        </h1>
        <WindowButtons className="h-[19px] w-[21px]" />
      </header>

      <div className="shrink-0 bg-[#d4d0c8]">
        <div className="flex h-[31px]">
          <Band className="w-[374px]">
            <EnsignLogo className="ml-[2px] size-[20px]" />
            <nav className="ml-[5px] flex flex-1 gap-[14px] text-[13px]">
              {["File", "Set-Up", "View", "Charts", "Window", "Help"].map((m) => (
                <button key={m} className="whitespace-nowrap">{m}</button>
              ))}
            </nav>
            <WindowButtons className="h-[20px] w-[20px]" />
          </Band>
          <Band className="w-[332px]">
            {WINDOW_TOOLS.map((t) => <ToolButton key={t[0]} tool={t} />)}
          </Band>
          <Band className="ml-[11px] w-[265px]">
            {CHART_TOOLS.map((t) => <ToolButton key={t[0]} tool={t} />)}
          </Band>
          <Band className="w-[92px] bg-[#ffffd0]">
            <time className="flex-1 text-center text-[17px]">10:44:23</time>
          </Band>
          <Band className="w-[447px]">
            {VIEW_TOOLS.map((t) => <ToolButton key={t[0]} tool={t} />)}
          </Band>
        </div>
        <div className="flex h-[26px]">
          <Band className="w-[608px]">
            {DRAW_TOOLS.map((t) => <ToolButton key={t[0]} tool={t} pressed={t[0] === "Magnet"} />)}
          </Band>
        </div>
      </div>

      <main className="flex flex-1 flex-col font-['Liberation_Sans',Arial,sans-serif] text-[16px]">
        <div className="flex h-[30px] shrink-0">
          <div className="flex w-[22px] flex-col items-center pr-[7px]">
            <button aria-label="Close panel" className="mt-1">
              <svg viewBox="0 0 6 6" className="block size-[6px]"><path d="M1 1l4 4M5 1L1 5" stroke="#000" strokeWidth="2" /></svg>
            </button>
            <span className="mt-[6px] h-[10px] w-px bg-[#808080]" />
          </div>
          <div className="flex gap-3 leading-8 whitespace-nowrap">
            {STATUS.map((s) => <span key={s}>{s}</span>)}
          </div>
        </div>
        <div className="flex flex-1">
          <Legend />
          <div className="relative min-w-0 flex-1 overflow-hidden border-l border-black">
            <div className="absolute inset-0 -left-px overflow-hidden">
              <PricePlot />
            </div>
            <span className="absolute inset-y-0 -left-px w-px bg-black" />
          </div>
          <PriceAxis />
        </div>
        <TimeAxis />
      </main>

      <Taskbar />
    </div>
  );
}
